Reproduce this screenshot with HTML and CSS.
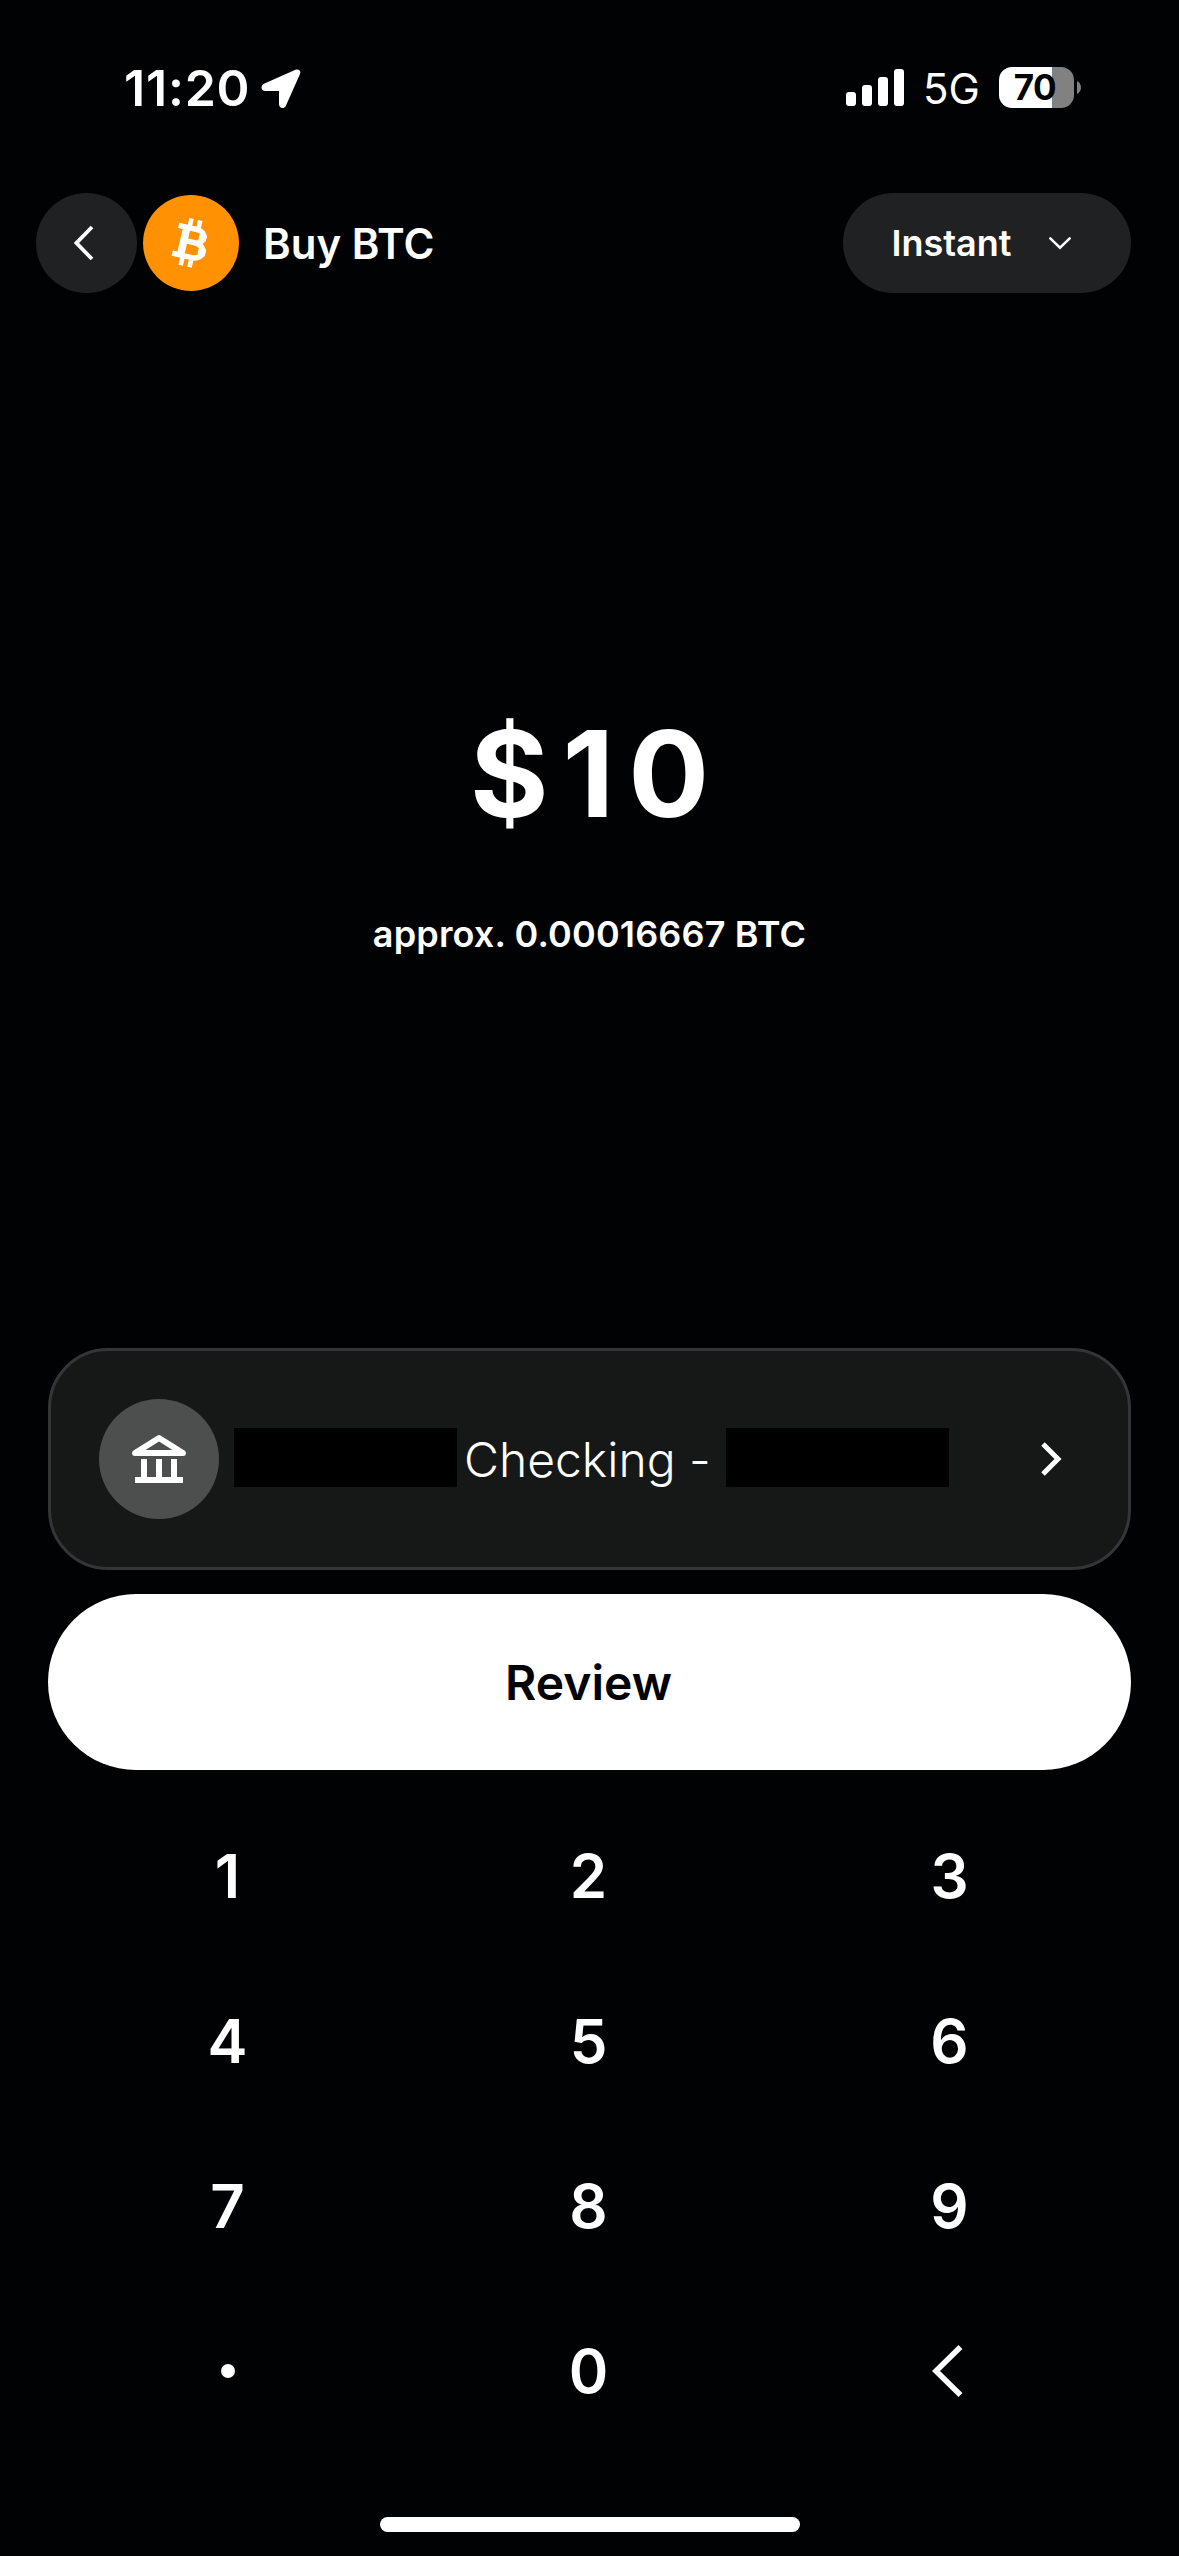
FILE: index.html
```html
<!DOCTYPE html>
<html lang="en">
<head>
  <meta charset="UTF-8">
  <meta name="viewport" content="width=device-width, initial-scale=1.0">
  <title>Buy BTC</title>
  <link rel="stylesheet" href="styles.css">
</head>
<body>
  <div class="status-bar">
    <span class="time">11:20</span>
    <svg class="location" width="40" height="40" viewBox="0 0 40 40">
      <path d="M3.5 14.5 L34.5 .8 C37.700 -.5 40.300 1.800 39 5 L25 36.500 C23.200 40.500 18 39.500 18 35.300 V22 H4.500 C-.3 22 -1 16.500 3.500 14.500 Z" fill="#fff"/>
    </svg>
    <div class="status-right">
      <svg class="signal" width="58" height="37" viewBox="0 0 58 37" fill="#fff">
        <rect x="0" y="23" width="10" height="14" rx="3"/>
        <rect x="16" y="16" width="10" height="21" rx="3"/>
        <rect x="32" y="8" width="10" height="29" rx="3"/>
        <rect x="48" y="0" width="10" height="37" rx="3"/>
      </svg>
      <span class="network">5G</span>
      <div class="battery">70</div>
      <svg class="battery-tip" width="4" height="13" viewBox="0 0 4 13">
        <path d="M0 0 C5.300 2.500 5.300 10.500 0 13 Z" fill="#808180"/>
      </svg>
    </div>
  </div>

  <header class="header">
    <button class="back-btn">
      <svg width="20" height="36" viewBox="0 0 20 36">
        <path d="M18 2 L2.500 18 L18 34" fill="none" stroke="#fff" stroke-width="3.800"/>
      </svg>
    </button>
    <div class="coin">
      <svg width="96" height="96" viewBox="0 0 96 96">
        <g transform="translate(48 48) rotate(13)" fill="none" stroke="#fff">
          <path d="M-5 -24 V-15 M4 -24 V-15 M-5 15 V24 M4 15 V24" stroke-width="4.600"/>
          <path d="M-16 -14.500 H3 C14 -14.500 14 -1 3 -1 H-7 M3 -1 C17 -1 17 14 4 14 H-16" stroke-width="5.400"/>
          <path d="M-7.500 -16 V16 M10.200 -11 V-4.500 M12.500 3 V10" stroke-width="7.500"/>
        </g>
      </svg>
    </div>
    <h1>Buy BTC</h1>
    <button class="speed-btn">
      <span>Instant</span>
      <svg width="24" height="14" viewBox="0 0 24 14">
        <path d="M2.300 2.300 L12 11.700 L21.700 2.300" fill="none" stroke="#fff" stroke-width="2.500" stroke-linecap="round"/>
      </svg>
    </button>
  </header>

  <main class="amount">
    <div class="amount-value">$10</div>
    <div class="amount-approx">approx. 0.00016667 BTC</div>
  </main>

  <section class="account">
    <div class="bank-icon">
      <svg width="54" height="48" viewBox="0 0 54 48" fill="#fff">
        <path fill-rule="evenodd" d="M25.500 .5 Q27 -.4 28.500 .5 L52.500 15.500 Q54 16.600 54 18.500 Q53.700 21 51 21 H3 Q.3 21 0 18.500 Q0 16.600 1.500 15.500 Z M27 6.500 L13.500 15 H40.500 Z"/>
        <path d="M9 24 H15 V42 H24 V24 H30 V42 H39 V24 H45 V42 H51 V48 H3 V42 H9 Z"/>
      </svg>
    </div>
    <div class="redacted"></div>
    <span class="account-name">Checking -</span>
    <div class="redacted"></div>
    <svg class="account-arrow" width="22" height="36" viewBox="0 0 22 36">
      <path d="M3 3 L18 18 L3 33" fill="none" stroke="#fff" stroke-width="5"/>
    </svg>
  </section>

  <button class="review-btn">Review</button>

  <div class="keypad">
    <button>1</button>
    <button>2</button>
    <button>3</button>
    <button>4</button>
    <button>5</button>
    <button>6</button>
    <button>7</button>
    <button>8</button>
    <button>9</button>
    <button><span class="dot"></span></button>
    <button>0</button>
    <button class="delete-btn">
      <svg width="32" height="52" viewBox="0 0 32 52">
        <path d="M29.500 2 L5 26 L29.500 50" fill="none" stroke="#fff" stroke-width="5.600"/>
      </svg>
    </button>
  </div>

  <div class="home-indicator"></div>
</body>
</html>
```
FILE: styles.css
```css
* {
  box-sizing: border-box;
}

body {
  margin: 0;
  height: 2556px;
  display: flex;
  flex-direction: column;
  background-color: #010204;
  color: #fff;
  font-family: Inter, sans-serif;
}

button {
  display: flex;
  align-items: center;
  justify-content: center;
  padding: 0;
  border: none;
  background: none;
  color: #fff;
  font-family: inherit;
}

svg {
  display: block;
  flex-shrink: 0;
}

.status-bar {
  display: flex;
  align-items: center;
  height: 175px;
  padding: 0 98px 0 124px;
}

.time {
  width: 137px;
  font-size: 50px;
  font-weight: 600;
  letter-spacing: 0.8px;
}

.location {
  margin-top: 2px;
}

.status-right {
  display: flex;
  align-items: center;
  margin-left: auto;
}

.network {
  width: 76px;
  margin-left: 19px;
  font-size: 42px;
  line-height: 1;
  padding-top: 3px;
}

.battery {
  width: 75px;
  height: 41px;
  padding-right: 3px;
  border-radius: 13px;
  background: linear-gradient(to right, #fff 53px, #808180 53px);
  color: #010204;
  font-size: 35px;
  font-weight: 700;
  line-height: 41px;
  text-align: center;
  letter-spacing: -0.5px;
}

.battery-tip {
  margin-left: 3px;
}

.header {
  display: flex;
  align-items: center;
  height: 100px;
  margin-top: 18px;
  padding: 0 48px 0 36px;
}

.back-btn {
  width: 101px;
  height: 100px;
  padding-right: 6px;
  border-radius: 50%;
  background-color: #202122;
}

.coin {
  width: 96px;
  height: 96px;
  margin-left: 6px;
  border-radius: 50%;
  background-color: #ff9103;
}

h1 {
  margin: 0 0 0 24px;
  font-size: 42px;
  font-weight: 600;
}

.speed-btn {
  width: 288px;
  height: 100px;
  margin-left: auto;
  gap: 36px;
  padding-right: 11px;
  border-radius: 50px;
  background-color: #202122;
  font-size: 36px;
  font-weight: 600;
}

.amount {
  height: 1055px;
  padding-top: 401px;
  text-align: center;
}

.amount-value {
  padding-left: 14px;
  font-size: 120px;
  font-weight: 750;
  letter-spacing: 14px;
  line-height: 160px;
}

.amount-approx {
  margin-top: 56px;
  font-size: 36px;
  font-weight: 600;
  letter-spacing: 0.15px;
  line-height: 48px;
}

.account {
  display: flex;
  align-items: center;
  height: 222px;
  margin: 0 48px;
  padding: 0 66px 0 48px;
  border: 3px solid #343537;
  border-radius: 60px;
  background-color: #161817;
}

.bank-icon {
  display: flex;
  align-items: center;
  justify-content: center;
  width: 120px;
  height: 120px;
  margin-right: 15px;
  border-radius: 50%;
  background-color: #4d4f4e;
}

.redacted {
  width: 223px;
  height: 59px;
  margin-bottom: 4px;
  background-color: #000;
}

.account-name {
  width: 269px;
  padding-left: 7px;
  font-size: 48px;
  font-weight: 350;
  white-space: nowrap;
}

.account-arrow {
  margin-left: auto;
}

.review-btn {
  height: 176px;
  margin: 24px 48px;
  padding-right: 2px;
  border-radius: 88px;
  background-color: #fff;
  color: #010204;
  font-size: 48px;
  font-weight: 600;
}

.keypad {
  display: grid;
  grid-template-columns: repeat(3, 1fr);
  grid-auto-rows: 165px;
  margin: -1px 48px 0;
}

.keypad button {
  padding-right: 2px;
  font-size: 60px;
  font-weight: 600;
}

.keypad .delete-btn {
  padding-right: 8px;
}

.dot {
  width: 14px;
  height: 14px;
  border-radius: 50%;
  background-color: #fff;
}

.home-indicator {
  width: 420px;
  height: 15px;
  margin: auto auto 24px;
  border-radius: 8px;
  background-color: #fff;
}
```
